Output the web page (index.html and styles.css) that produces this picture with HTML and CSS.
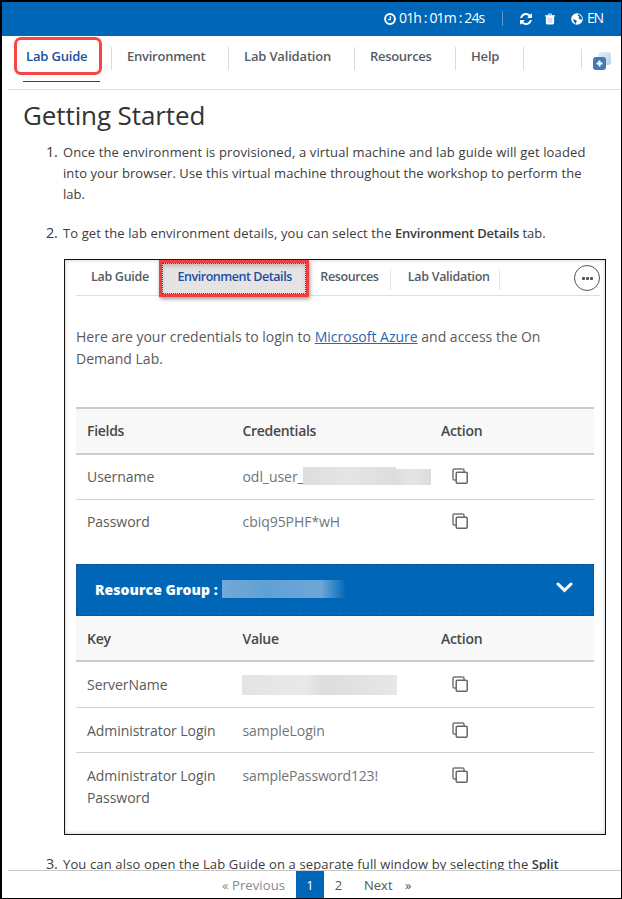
FILE: index.html
```html
<!DOCTYPE html>
<html lang="en">
<head>
<meta charset="utf-8">
<title>Lab Guide</title>
<link rel="stylesheet" href="styles.css">
</head>
<body>
<svg class="defs" width="0" height="0">
  <symbol id="copy" viewBox="0 0 16 16">
    <path d="M4 12H2.200Q1 12 1 10.800V2.200Q1 1 2.200 1H10.800Q12 1 12 2.200V4" fill="none" stroke="#777" stroke-width="1.500"/>
    <rect x="4.200" y="4.200" width="11" height="11" rx="1.200" fill="#fff" stroke="#666" stroke-width="1.500"/>
  </symbol>
</svg>
<div class="app">
  <header class="topbar">
    <svg class="clock" width="12" height="12" viewBox="0 0 11 11"><circle cx="5.5" cy="5.5" r="4.5" fill="none" stroke="#fff" stroke-width="1.8"/><path d="M5.8 3v3H3.7" fill="none" stroke="#fff" stroke-width="1.1"/></svg>
    <span class="timer">01h : 01m : 24s</span>
    <i class="bar"></i>
    <svg class="refresh" width="12" height="12" viewBox="0 0 1536 1536"><path fill="#fff" d="M1511 928q0 5-1 7-64 268-268 434.500T764 1536q-146 0-282.500-55T238 1324l-129 129q-19 19-45 19t-45-19-19-45V960q0-26 19-45t45-19h448q26 0 45 19t19 45-19 45l-137 137q71 66 161 102t187 36q134 0 250-65t186-179q11-17 53-117 8-23 30-23h192q13 0 22.500 9.500t9.500 22.500zm25-800v448q0 26-19 45t-45 19h-448q-26 0-45-19t-19-45 19-45l138-138Q969 256 768 256q-134 0-250 65T332 500q-11 17-53 117-8 23-30 23H50q-13 0-22.500-9.500T18 608v-7q65-268 270-434.500T768 0q146 0 284 55.500T1297 212l130-129q19-19 45-19t45 19 19 45z"/></svg>
    <svg class="trash" width="10" height="12" viewBox="0 0 11 12"><path fill="#fff" d="M0 1.800h3l.700-1.300Q4 0 4.500 0h2Q7 0 7.300.5L8 1.800h3v1.500h-1v7.200Q10 12 8.700 12H2.300Q1 12 1 10.500V3.300H0zM4.200 1.800h2.600L6.400 1H4.600z"/><path d="M3.500 4.500v5.500M5.500 4.500v5.500M7.500 4.500v5.500" stroke="#9a9af0" stroke-width=".7"/></svg>
    <svg class="globe" width="12" height="12" viewBox="0 0 12 12"><circle cx="6" cy="6" r="5.800" fill="#fff"/><path fill="#0067b8" d="M7 1.200l1.500.5 2 2.100.6 2.200-1.200.8-1.500-.7-.9-1.500.8-1.200-1.600-.8zM1.800 6.200l2.400.6 1.700 1.300-.8 1.500-.4 1.300-1.500-1.600z"/></svg>
    <span class="lang">EN</span>
  </header>
  <nav class="tabs">
    <div class="tab tab-active"><span class="t-guide">Lab Guide</span></div>
    <div class="tab tab-env">Environment</div>
    <div class="tab tab-val">Lab Validation</div>
    <div class="tab tab-res">Resources</div>
    <div class="tab tab-help">Help</div>
    <div class="split">
      <svg width="20" height="20" viewBox="0 0 20 20"><defs><linearGradient id="g" x1="0" y1="0" x2="1" y2="1"><stop offset="0" stop-color="#e6f0fa"/><stop offset="1" stop-color="#b4cfe9"/></linearGradient></defs><rect x="6" y="0" width="13" height="13" rx="3" fill="url(#g)"/><rect x="1" y="5" width="13" height="13" rx="3" fill="#4478b5"/><path d="M7.500 8.500v6M4.500 11.500h6" stroke="#fff" stroke-width="2"/></svg>
    </div>
  </nav>
  <main class="content">
    <h1>Getting Started</h1>
    <ol class="steps">
      <li><span class="num">1.</span><p><span class="l1">Once the environment is provisioned, a virtual machine and lab guide will get loaded</span><br><span class="l2">into your browser. Use this virtual machine throughout the workshop to perform the</span><br>lab.</p></li>
      <li><span class="num">2.</span><p><span class="l3">To get the lab environment details, you can select the</span> <b>Environment Details</b> tab.</p></li>
    </ol>
    <section class="panel">
      <div class="ptabs">
        <div class="ptab p1">Lab Guide</div>
        <div class="ptab p2">Environment Details</div>
        <div class="ptab p3">Resources</div>
        <div class="ptab p4">Lab Validation</div>
        <div class="more"><i></i><i></i><i></i></div>
      </div>
      <p class="intro">Here are your credentials to login to <a>Microsoft Azure</a> and access the On<br>Demand Lab.</p>
      <div class="table first">
        <div class="row head"><span>Fields</span><span>Credentials</span><span>Action</span></div>
        <div class="row user"><span>Username</span><span class="val">odl_user_<i class="mask m1"></i><i class="mask m2"></i></span><svg class="copy"><use href="#copy"/></svg></div>
        <div class="row last"><span>Password</span><span class="val">cbiq95PHF*wH</span><svg class="copy"><use href="#copy"/></svg></div>
      </div>
      <div class="banner"><b>Resource Group :</b><i class="mask-blue"></i><svg width="17" height="11" viewBox="0 0 17 11"><path d="M2 2l6.500 6.300L15 2" fill="none" stroke="#fff" stroke-width="3" stroke-linecap="round"/></svg></div>
      <div class="table second">
        <div class="row head"><span>Key</span><span>Value</span><span>Action</span></div>
        <div class="row"><span>ServerName</span><span class="val"><i class="mask m3"></i></span><svg class="copy"><use href="#copy"/></svg></div>
        <div class="row short"><span>Administrator Login</span><span class="val">sampleLogin</span><svg class="copy"><use href="#copy"/></svg></div>
        <div class="row tall"><span>Administrator Login<br>Password</span><span class="val pw">samplePassword123!</span><svg class="copy"><use href="#copy"/></svg></div>
      </div>
    </section>
    <ol class="steps after">
      <li><span class="num">3.</span><p><span class="l4">You can also open the Lab Guide on a separate full window by selecting the</span> <b>Split</b></p></li>
    </ol>
  </main>
  <footer class="pager">
    <span class="prev">« Previous</span><span class="page on">1</span><span class="page two">2</span><span class="next">Next</span><span class="raquo">»</span>
  </footer>
</div>
</body>
</html>
```
FILE: styles.css
```css
* { box-sizing: border-box; }
body { margin: 0; font-family: "Open Sans", "Noto Sans", sans-serif; font-size: 13px; color: #3c3c3c; background: #fff; }
.defs { position: absolute; }
.app { width: 622px; height: 899px; border: solid #000; border-width: 2px 1px 1px 2px; display: flex; flex-direction: column; overflow: hidden; }
.topbar { height: 34px; flex: none; background: #0067b8; color: #fff; display: flex; align-items: center; padding: 0 0 1px 0; white-space: nowrap; }
.topbar svg, .bar { flex: none; }
.clock { margin-left: 382px; }
.timer { margin-left: 3px; width: 86px; font-size: 14px; letter-spacing: -0.85px; margin-top: -2px; }
.bar { width: 1px; height: 15px; background: #5c9bd0; margin-left: 17px; }
.refresh { margin-left: 17px; }
.trash { margin-left: 13px; }
.globe { margin-left: 16px; }
.lang { margin-left: 4px; font-size: 14px; letter-spacing: -1.2px; margin-top: -2px; }
.tabs { height: 54px; flex: none; margin-left: 6px; border-bottom: 1px solid #dedede; display: flex; white-space: nowrap; }
.tab { height: 23px; margin-top: 11px; line-height: 19px; border-right: 1px solid #d8dce0; padding-left: 15px; font-weight: 600; letter-spacing: -0.17px; color: #555c64; }
.tab-active { height: 45px; width: 88px; margin: 1px 0 0 6px; padding: 0; border: 0; color: #174fa0; }
.t-guide { display: block; width: 88px; height: 38px; border: 3px solid #fa4343; border-radius: 7px; padding: 7px 0 0 9px; }
.tab-active::after { content: ""; display: block; width: 77px; height: 1px; background: #0b4a96; margin: 6px 0 0 9px; }
.tab-env { margin-left: 9px; border-left: 1px solid #d8dce0; width: 118px; letter-spacing: -0.25px; }
.tab-val { width: 126px; }
.tab-res { width: 101px; letter-spacing: -0.3px; }
.tab-help { width: 68px; }
.split { width: 34px; height: 20px; border-left: 1px solid #d8dce0; margin: 13px 0 0 57px; padding: 3px 0 0 10px; }
.content { flex: 1; min-height: 0; overflow: hidden; }
h1 { margin: 7px 0 0 21px; font-size: 26px; line-height: 36px; font-weight: 400; letter-spacing: -0.1px; color: #333; }
.steps { list-style: none; margin: 9px 0 0 44px; padding: 0; }
.steps li { display: flex; margin-bottom: 18px; line-height: 21px; white-space: nowrap; }
.steps p { margin: 0; }
.num { width: 17px; font-size: 14.500px; letter-spacing: -0.4px; margin-top: -1px; }
.steps b { font-weight: 600; letter-spacing: -0.2px; }
.l1 { letter-spacing: 0.14px; }
.l2 { letter-spacing: 0.08px; }
.l3 { letter-spacing: 0.11px; }
.l4 { letter-spacing: 0.14px; }
.panel { margin: -3px 0 0 62px; width: 542px; height: 576px; border: 1px solid #111; box-shadow: inset 0 0 4px #ccc; padding: 0 5px 0 11px; color: #5a5a5a; white-space: nowrap; }
.ptabs { display: flex; height: 36px; border-bottom: 1px solid #dedede; font-size: 12.500px; font-weight: 600; letter-spacing: -0.3px; color: #555c64; line-height: 34px; }
.p1 { width: 84px; padding-left: 15px; }
.p2 { width: 151px; height: 37px; border: 3px solid #ee3f3f; background: #e7e3e4; color: #174fa0; padding-left: 15px; line-height: 28px; letter-spacing: -0.45px; box-shadow: 1px 2px 4px #999, inset 0 3px 4px #bbb; }
.p2 { outline: 1px dotted #174fa0; outline-offset: -4px; }
.p3 { width: 82px; padding-left: 11px; letter-spacing: -0.4px; }
.p4 { width: 110px; padding-left: 17px; }
.p3, .p4 { background: linear-gradient(#e4e4e4, #e4e4e4) right 0 top 9px / 1px 21px no-repeat; }
.more { width: 26px; height: 26px; border: 1px solid #555; border-radius: 50%; margin: 5px 0 0 74px; display: flex; gap: 1px; align-items: center; justify-content: center; flex: none; }
.more i { width: 3px; height: 3px; background: #555; border-radius: 1px; }
.intro { margin: 30px 0 0; font-size: 14px; line-height: 22px; }
.intro a { color: #2b66b5; text-decoration: underline; }
.table { width: 518px; font-size: 14px; letter-spacing: -0.05px; line-height: 22px; }
.first { margin-top: 37px; border-top: 2px solid #ccc; }
.row { display: grid; grid-template-columns: 155.500px 198.500px 1fr; padding: 11px 0 0 11px; height: 46px; border-bottom: 1px solid #d2d2d2; }
.second .row { padding-top: 12px; }
.head { background: #f8f8f8; color: #484848; font-weight: 600; letter-spacing: -0.3px; border-bottom: 2px solid #ccc; }
.val { color: #70757a; display: flex; }
.pw { letter-spacing: -0.15px; }
.copy { width: 16px; height: 16px; margin: 2px 0 0 11px; }
.last, .tall { border: 0; }
.user, .short { height: 45px; }
.tall { height: 70px; }
.mask { display: block; background: linear-gradient(90deg, #dcdddf, #e4e5e6, #dbdcde); }
.m1 { width: 93px; height: 18px; margin: 1px 0 0 -1px; }
.m2 { width: 35px; height: 16px; margin-top: 3px; }
.m3 { width: 155px; height: 20px; margin: 1px 0 0 -1px; background: linear-gradient(90deg, #e3e4e5, #e8e9ea 40%, #dcddde 52%, #e6e7e8); }
.banner { width: 518px; height: 52px; margin-top: 18px; background: #0067b8; border: 1px dashed #174b91; color: #fff; display: flex; align-items: center; padding-left: 18px; font-size: 14px; }
.banner b { font-weight: 800; width: 127px; letter-spacing: 0.05px; margin-top: -2px; }
.mask-blue { width: 124px; height: 18px; margin-top: -2px; background: linear-gradient(90deg, #72a9d7, #61a0d4 35%, #6ca7d8 80%, #0067b8); }
.banner svg { margin: 0 0 6px 210px; }
.after { margin-top: 19px; }
.pager { height: 28px; flex: none; margin-left: 6px; border-top: 1px solid #c9c9c9; display: flex; line-height: 28px; font-size: 13px; color: #555; }
.prev { margin-left: 214px; width: 74px; color: #888; letter-spacing: 0.1px; }
.page { width: 28px; text-align: center; }
.on { background: #0067b8; color: #fff; }
.two { padding-left: 1px; }
.next { margin-left: 12px; width: 41px; }
```
